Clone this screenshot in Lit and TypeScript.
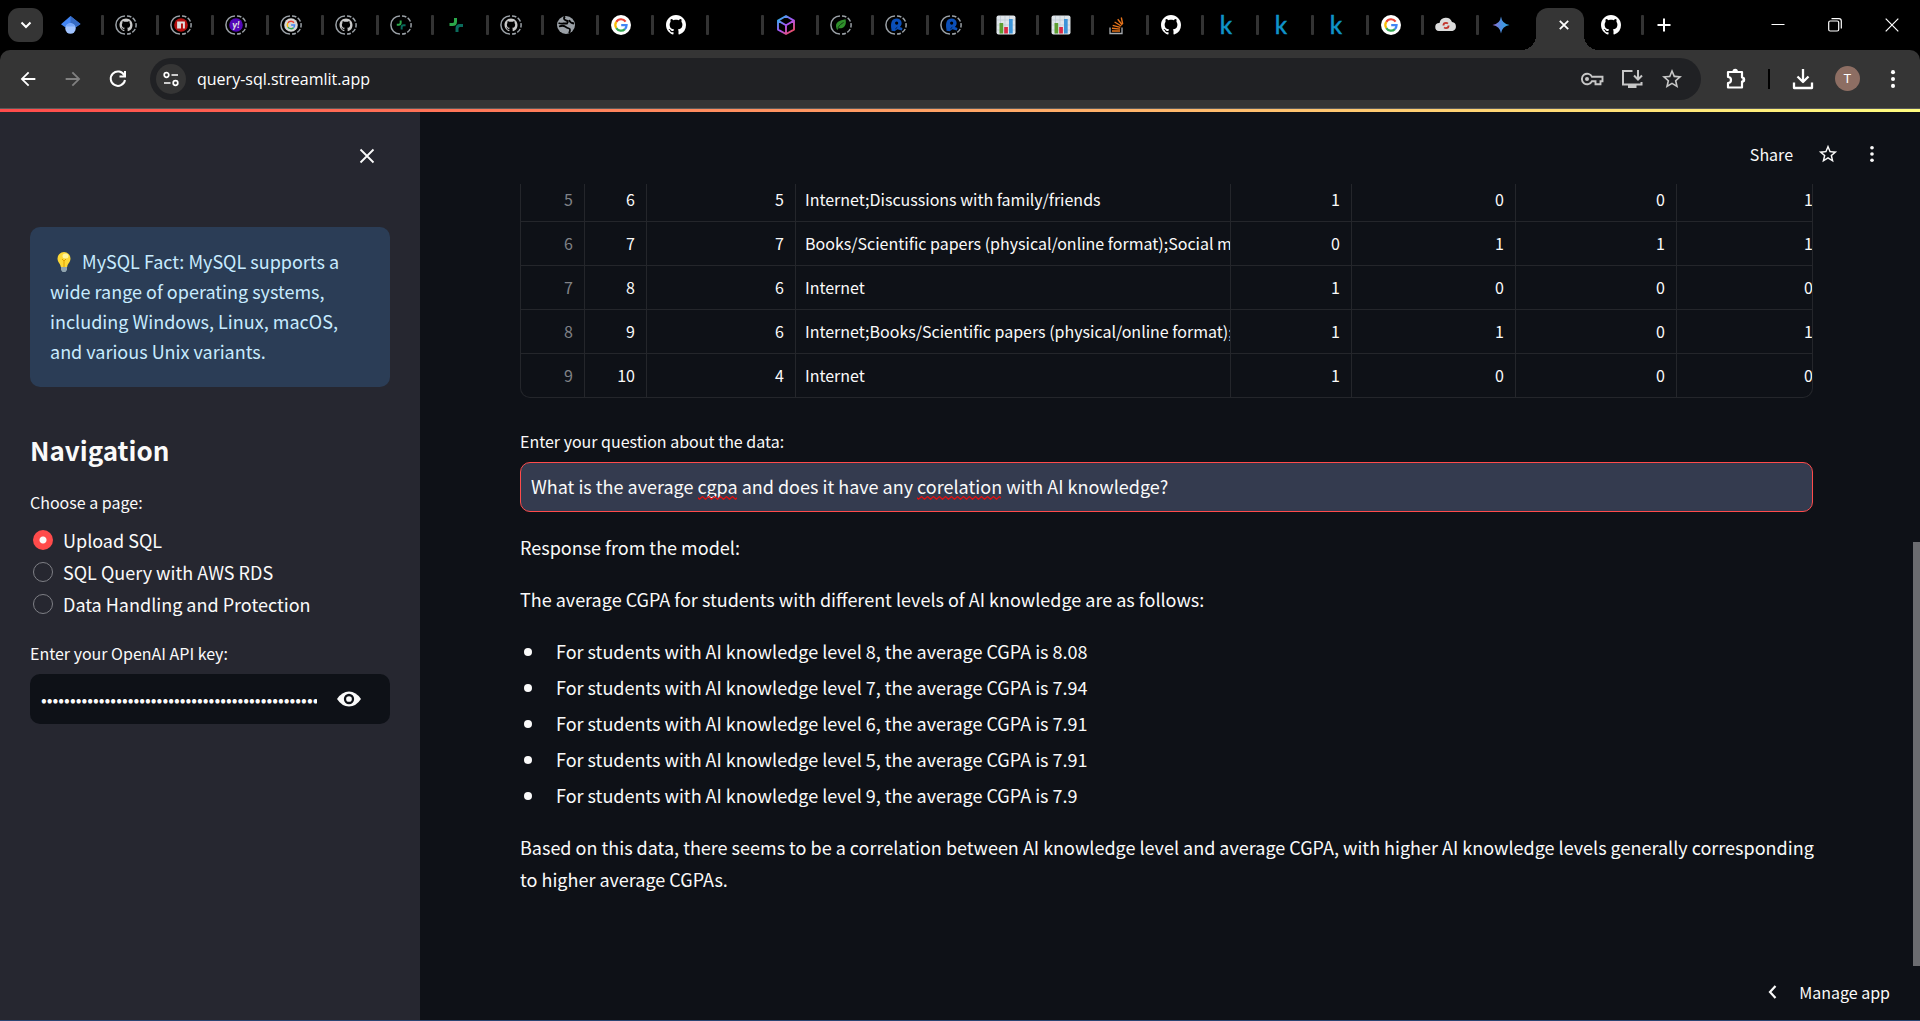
import { LitElement, html, svg, css, TemplateResult, SVGTemplateResult } from "lit";
import { customElement, property, state } from "lit/decorators.js";

const icon = (size: number, box: string, body: SVGTemplateResult): TemplateResult =>
  html`<svg width=${size} height=${size} viewBox=${box} fill="currentColor" aria-hidden="true">${body}</svg>`;

const OCTOCAT =
  "M8 0C3.58 0 0 3.58 0 8c0 3.54 2.29 6.53 5.47 7.59.4.07.55-.17.55-.38 0-.19-.01-.82-.01-1.49-2.01.37-2.53-.49-2.69-.94-.09-.23-.48-.94-.82-1.13-.28-.15-.68-.52-.01-.53.63-.01 1.08.58 1.23.82.72 1.21 1.87.87 2.33.66.07-.52.28-.87.51-1.07-1.78-.2-3.64-.89-3.64-3.95 0-.87.31-1.59.82-2.15-.08-.2-.36-1.02.08-2.12 0 0 .67-.21 2.2.82.64-.18 1.32-.27 2-.27s1.36.09 2 .27c1.53-1.04 2.2-.82 2.2-.82.44 1.1.16 1.92.08 2.12.51.56.82 1.27.82 2.15 0 3.07-1.87 3.75-3.65 3.95.29.25.54.73.54 1.48 0 1.07-.01 1.93-.01 2.2 0 .21.15.46.55.38A8.01 8.01 0 0 0 16 8c0-4.42-3.58-8-8-8z";

const googleG = svg`
  <path d="M14.6 6.6A5.6 5.6 0 0 0 5.3 6.9" fill="none" stroke="#ea4335" stroke-width="2.2"/>
  <path d="M5.3 6.9a5.6 5.6 0 0 0 0 6.2" fill="none" stroke="#fbbc05" stroke-width="2.2"/>
  <path d="M5.3 13.1a5.6 5.6 0 0 0 8.6 1" fill="none" stroke="#34a853" stroke-width="2.2"/>
  <path d="M10.2 10.1h5.4a5.6 5.6 0 0 1-1.8 4.1" fill="none" stroke="#4285f4" stroke-width="2.2"/>`;

const clover = svg`
  <path d="M9.500 3v3.500q0 3-3 3H3.500" fill="none" stroke="#2ba84a" stroke-width="3"/>
  <path d="M17 10.500h-3q-3 0-3 3V17" fill="none" stroke="#0a6b5c" stroke-width="3"/>`;

/** Ring drawn round the favicon of a tab that has been put to sleep. */
const asleep = (body: SVGTemplateResult) => svg`
  <path d="M9 .9a9.100 9.100 0 0 0 0 18.200" fill="none" stroke="#9aa0a6" stroke-width="1.500"/>
  <path d="M11 .9a9.100 9.100 0 0 1 0 18.200" fill="none" stroke="#9aa0a6" stroke-width="1.500" stroke-dasharray="4.500 1.600"/>
  <g transform="translate(3.500 3.500) scale(.65)">${body}</g>`;

const chart = svg`
  <rect x=".5" y=".5" width="19" height="19" rx="2" fill="#dfe5ea"/>
  <path d="M4.500 1v18M9 1v18M13.500 1v18M1 5h18M1 10h18M1 15h18" stroke="#bcc8d2" stroke-width=".7"/>
  <rect x="3.500" y="8" width="3.700" height="10.500" fill="#5c9e31"/>
  <rect x="8.200" y="12" width="3.700" height="6.500" fill="#dc2a45"/>
  <rect x="13" y="4" width="3.700" height="14.500" fill="#3b94d9"/>`;

const ribbon = svg`
  <path d="M3 17C1 6 4 0 11 0c8 0 10 9 5 13l4 1.500-1 4-7-2-4 3-5-.5z" fill="#0b4fb8"/>
  <circle cx="11" cy="7" r="2.500" fill="#000"/>
  <path d="M9 16l3-2.500" stroke="#000" stroke-width="1"/>`;

const github = svg`<path transform="scale(1.25)" fill="#fff" d=${OCTOCAT}/>`;
const githubDim = svg`<path transform="scale(1.25)" fill="#c9c9c9" d=${OCTOCAT}/>`;
const google = svg`<circle cx="10" cy="10" r="10" fill="#fff"/>${googleG}`;
const kaggle = svg`<text x="10" y="19" text-anchor="middle" font-family="Lato, sans-serif" font-size="24" font-weight="500" fill="#0f93c9" stroke="#0f93c9" stroke-width=".4">k</text>`;

const FAVICONS: Record<string, SVGTemplateResult> = {
  scholar: svg`
    <path d="M9.500 1L0 9.200l4.500 3.300h10L19.500 9z" fill="#4285f4"/>
    <path d="M9.500 1v9l5 2.500 5-3.500z" fill="#356ac3"/>
    <circle cx="9.500" cy="13.500" r="5.200" fill="#a0c3ff"/>
    <path d="M4.700 11.500a5.200 5.200 0 0 1 9.600 0z" fill="#76a7fa"/>`,
  githubAsleep: asleep(githubDim),
  npm: asleep(svg`<circle cx="10" cy="10" r="10.500" fill="#b5100f"/><path d="M4 4.500h12v11h-3v-8h-3v8H4z" fill="#ddd"/>`),
  yahoo: asleep(svg`<circle cx="10" cy="10" r="10.500" fill="#5207b8"/><text x="10" y="14" text-anchor="middle" font-family="Lato, sans-serif" font-size="15" font-weight="900" font-style="italic" fill="#ddd">y!</text>`),
  googleAsleep: asleep(svg`<circle cx="10" cy="10" r="10.500" fill="#d5d5d5"/>${googleG}`),
  cloverAsleep: asleep(clover),
  clover,
  globe: svg`<circle cx="10" cy="10" r="9" fill="#9aa0a6"/>
    <path d="M9 1.500Q6.500 4 10 5.500q3 .5 1 3H7q-2 .5-4.500-.5" fill="none" stroke="#000" stroke-width="1.800"/>
    <path d="M3 11.500q4-1.500 6 0t4 2 0 4.500M13 5q1 3 5 3.500" fill="none" stroke="#000" stroke-width="1.800"/>`,
  google,
  github,
  cube: svg`
    <defs><linearGradient id="cube" x1="2" y1="1" x2="18" y2="19" gradientUnits="userSpaceOnUse">
      <stop offset="0" stop-color="#18c4e8"/><stop offset=".5" stop-color="#a855f7"/><stop offset="1" stop-color="#ff4a3d"/>
    </linearGradient></defs>
    <path d="M10 1l8 4.600v9L10 19l-8-4.400v-9zM2 5.600l8 4.600 8-4.600M10 10.200V19" fill="none" stroke="url(#cube)" stroke-width="1.900" stroke-linejoin="round"/>`,
  leaf: asleep(svg`<path d="M3 15C0 5 8 3 17 1c2 9-2 15-11 14l-2 3z" fill="#2f8f2b"/><path d="M5 15C8 9 11 8 14 6" stroke="#0c2b0c" stroke-width="1.300" fill="none"/>`),
  ribbon: asleep(ribbon),
  chart,
  stack: svg`
    <path d="M4 12.500v6h12v-6" fill="none" stroke="#a9adb1" stroke-width="1.300"/>
    <path d="M6 16h8M6 13.300l8 .8M6.700 10.300l7.600 2.100M8.600 7l6.600 4M11.700 4.200l4.600 5.800M15.300 2.500l1.400 6.500" stroke="#e8741b" stroke-width="1.400" fill="none"/>`,
  kaggle,
  cloud: svg`<path d="M3 16a4 4 0 0 1 .5-8A6.500 6.500 0 0 1 16 7a4.600 4.600 0 0 1 .5 9z" fill="#dcdcdc"/>
    <circle cx="10" cy="10.500" r="2.600" fill="none" stroke="#c2342c" stroke-width="1.800" stroke-dasharray="6 2"/>`,
  gemini: svg`
    <defs><linearGradient id="gem"><stop offset="0" stop-color="#9a6bd0"/><stop offset=".5" stop-color="#4c8fe0"/><stop offset="1" stop-color="#2ba6e0"/></linearGradient></defs>
    <path d="M10 1.500Q11 9 18.500 10 11 11 10 18.500 9 11 1.500 10 9 9 10 1.500z" fill="url(#gem)"/>`,
  none: svg``,
};

const TABS: [string, string][] = [
  ["scholar", "Scholar"], ["githubAsleep", "GitHub"], ["npm", "npm"], ["yahoo", "Yahoo"], ["googleAsleep", "Google"],
  ["githubAsleep", "GitHub"], ["cloverAsleep", "Clover"], ["clover", "Clover"], ["githubAsleep", "GitHub"],
  ["globe", "Site"], ["google", "Google"], ["github", "GitHub"], ["none", "Blank"], ["cube", "Cube"], ["leaf", "Leaf"],
  ["ribbon", "Ribbon"], ["ribbon", "Ribbon"], ["chart", "Chart"], ["chart", "Chart"], ["stack", "Stack"],
  ["github", "GitHub"], ["kaggle", "Kaggle"], ["kaggle", "Kaggle"], ["kaggle", "Kaggle"], ["google", "Google"],
  ["cloud", "Cloud"], ["gemini", "Gemini"],
];

const STAR = svg`<path d="M22 9.240l-7.190-.62L12 2 9.190 8.630 2 9.240l5.460 4.730L5.820 21 12 17.270 18.180 21l-1.630-7.030L22 9.240zM12 15.400l-3.760 2.270 1-4.280-3.320-2.880 4.380-.38L12 6.100l1.710 4.040 4.380.38-3.320 2.880 1 4.280L12 15.400z"/>`;
const DOTS = svg`<circle cx="12" cy="4.500" r="2.200"/><circle cx="12" cy="12" r="2.200"/><circle cx="12" cy="19.500" r="2.200"/>`;
const BACK = svg`<path d="M20 11H7.830l5.590-5.590L12 4l-8 8 8 8 1.410-1.410L7.830 13H20z"/>`;

const reset = css`
  * { box-sizing: border-box; }
  button {
    border: 0;
    padding: 0;
    background: none;
    color: inherit;
    font: inherit;
    display: flex;
    align-items: center;
    justify-content: center;
    flex: none;
  }
  svg { display: block; flex: none; }
`;

@customElement("browser-chrome")
export class BrowserChrome extends LitElement {
  static styles = [reset, css`
    :host { display: block; background: #000; color: #fff; }
    .strip { display: flex; align-items: flex-end; height: 50px; }
    .search { width: 35px; height: 34px; margin: 0 6px 8px 8px; border-radius: 11px; background: #353535; }
    .tabs { display: flex; align-items: flex-end; }
    .tab {
      width: 55px;
      height: 50px;
      padding-left: 12px;
      justify-content: space-between;
    }
    .tab svg { overflow: visible; }
    .tab::after { content: ""; width: 3px; height: 20px; border-radius: 1px; background: #333; }
    .tab:nth-child(27)::after { visibility: hidden; }
    .last { width: 60px; padding-left: 17px; }
    .active {
      position: relative;
      width: 48px;
      height: 42px;
      margin-left: 2px;
      padding: 0 0 8px 7px;
      border-radius: 12px 12px 0 0;
      background: #353535;
    }
    .active::before, .active::after {
      content: "";
      position: absolute;
      bottom: 0;
      width: 15px;
      height: 15px;
    }
    .active::before { right: 100%; background: radial-gradient(circle at 0 0, transparent 15px, #353535 15px); }
    .active::after { left: 100%; background: radial-gradient(circle at 100% 0, transparent 15px, #353535 15px); }
    .plus { width: 40px; height: 50px; }
    .window { display: flex; margin-left: auto; }
    .window button { width: 57px; height: 50px; }
    .bar {
      display: flex;
      align-items: center;
      height: 59px;
      padding: 0 5px 1px 5px;
      border-radius: 10px 10px 0 0;
      border-bottom: 1px solid #5a5a5a;
      background: #353535;
    }
    .bar > button { width: 45px; height: 40px; }
    .off { color: #808080; }
    .omni {
      display: flex;
      align-items: center;
      flex: 1;
      height: 42px;
      margin: 0 12px 0 10px;
      padding: 0 9px 0 6px;
      border-radius: 21px;
      background: #202124;
    }
    .site { width: 30px; height: 30px; border-radius: 50%; background: #353535; }
    .url {
      flex: 1;
      min-width: 0;
      height: 30px;
      padding: 0;
      margin-left: 11px;
      border: 0;
      outline: 0;
      background: none;
      color: #fff;
      font: 16px "Open Sans", "Noto Sans", sans-serif;
    }
    .omni .act { width: 40px; height: 40px; color: #c7c7c7; }
    .rule { width: 2px; height: 20px; margin: 0 10px; background: #000; }
    .avatar span {
      width: 25px;
      border-radius: 50%;
      background: #8d6e63;
      color: #fff;
      font: 13px/25px Roboto, sans-serif;
    }
  `];

  render() {
    return html`
      <div class="strip">
        <button class="search" aria-label="Search tabs">
          ${icon(12, "0 0 12 12", svg`<path d="M1.500 3.500L6 8l4.500-4.500" fill="none" stroke="#fff" stroke-width="2"/>`)}
        </button>
        <div class="tabs">
          ${TABS.map(([name, label]) => html`<button class="tab" aria-label=${label}>${icon(20, "0 0 20 20", FAVICONS[name])}</button>`)}
          <button class="active" aria-label="Close tab">
            ${icon(10, "0 0 10 10", svg`<path d="M.8.8l8.400 8.400M9.200.8L.8 9.200" stroke="#fff" stroke-width="1.800"/>`)}
          </button>
          <button class="tab last" aria-label="GitHub">${icon(20, "0 0 20 20", github)}</button>
          <button class="plus" aria-label="New tab">
            ${icon(14, "0 0 14 14", svg`<path d="M7 .5v13M.5 7h13" stroke="#fff" stroke-width="2"/>`)}
          </button>
        </div>
        <div class="window">
          <button aria-label="Minimize">${icon(14, "0 0 14 14", svg`<path d="M.5 6.500h13" stroke="#fff"/>`)}</button>
          <button aria-label="Restore">${icon(14, "0 0 14 14", svg`
            <rect x=".7" y="3" width="10" height="10" rx="1.500" fill="none" stroke="#fff" stroke-width="1.200"/>
            <path d="M3.500.7h7.500a2.300 2.300 0 0 1 2.300 2.300v7.500" fill="none" stroke="#fff" stroke-width="1.200"/>`)}</button>
          <button aria-label="Close">${icon(14, "0 0 14 14", svg`<path d="M.7.7l12.600 12.600M13.300.7L.7 13.300" stroke="#fff" stroke-width="1.200"/>`)}</button>
        </div>
      </div>
      <div class="bar">
        <button aria-label="Back">${icon(22, "0 0 24 24", BACK)}</button>
        <button class="off" aria-label="Forward">${icon(22, "0 0 24 24", svg`<g transform="matrix(-1 0 0 1 24 0)">${BACK}</g>`)}</button>
        <button aria-label="Reload">${icon(24, "0 0 24 24", svg`
          <path d="M18.400 8.500A7.200 7.200 0 1 0 19 13" fill="none" stroke="currentColor" stroke-width="2"/>
          <path d="M20 4v6.500h-6.500v-2H18V4z"/>`)}</button>
        <div class="omni">
          <button class="site" aria-label="Site information">
            ${icon(16, "0 0 16 16", svg`<g fill="none" stroke="#fff" stroke-width="1.700">
              <circle cx="3.500" cy="4" r="2.300"/><path d="M8.500 4H15M1 12h6.500"/><circle cx="12.500" cy="12" r="2.300"/></g>`)}
          </button>
          <input class="url" aria-label="Address" .value=${"query-sql.streamlit.app"} spellcheck="false">
          <button class="act" aria-label="Passwords">${icon(24, "0 0 24 24", svg`<g fill="none" stroke="currentColor" stroke-width="1.900">
            <path d="M12 9.800A5.300 5.300 0 1 0 12 14.200h3.500v3h5v-3H22.500V9.800z"/></g><circle cx="7" cy="12" r="2"/>`)}</button>
          <button class="act" aria-label="Install">${icon(22, "0 0 22 22", svg`<g fill="none" stroke="currentColor" stroke-width="2">
            <path d="M11.500 3H2v13.500h18.500V14M17 2v9M13 7.500l4 4 4-4"/></g><path d="M7 17h8.500v3H7z"/>`)}</button>
          <button class="act" aria-label="Bookmark">${icon(24, "0 0 24 24", STAR)}</button>
        </div>
        <button aria-label="Extensions">${icon(24, "0 0 24 24", svg`
          <path d="M4 5h14v5.500a2 2 0 0 1 0 4V20.500H4v-4.500a3 3 0 0 0 0-6z" fill="none" stroke="currentColor" stroke-width="2.200" stroke-linejoin="round"/>
          <path d="M8.500 4.500a2.700 2.700 0 0 1 5.400 0zM18.500 10a2.700 2.700 0 0 1 0 5.400z"/>`)}</button>
        <div class="rule"></div>
        <button aria-label="Downloads">${icon(22, "0 0 22 22", svg`
          <path d="M11 1v12.500M5.500 8.500L11 14l5.500-5.500M2 14.500V20h18v-5.500" fill="none" stroke="currentColor" stroke-width="2.300" stroke-linejoin="round"/>`)}</button>
        <button class="avatar" aria-label="Profile"><span>T</span></button>
        <button aria-label="Menu">${icon(22, "0 0 24 24", DOTS)}</button>
      </div>
    `;
  }
}

@customElement("app-sidebar")
export class AppSidebar extends LitElement {
  @state() private page = "Upload SQL";

  static styles = [reset, css`
    :host { display: block; padding: 24px 30px; background: #262730; color: #fafafa; font-size: 18px; }
    .top { display: flex; justify-content: flex-end; height: 91px; }
    .close { width: 46px; height: 40px; }
    .fact {
      padding: 19px 20px 21px;
      border-radius: 10px;
      background: #2b3d56;
      color: #c7ebff;
      line-height: 30px;
      margin: 0;
    }
    .fact svg { display: inline-block; vertical-align: -3px; margin: 0 7px; }
    h2 { margin: 46px 0 0; font-size: 26px; line-height: 33px; font-weight: 700; }
    fieldset { border: 0; margin: 24px 0 0; padding: 0; }
    legend, .label { display: block; padding: 0; font-size: 16px; line-height: 24px; }
    .options { display: flex; flex-direction: column; padding-top: 10px; }
    .option { display: flex; align-items: center; gap: 10px; height: 32px; padding-left: 3px; line-height: 30px; }
    .option input {
      appearance: none;
      width: 20px;
      height: 20px;
      margin: 0;
      border-radius: 50%;
      border: 1px solid #7e7f85;
    }
    .option input:checked {
      border: 0;
      background: radial-gradient(circle, #fafafa 3px, #ff4b4b 4px);
    }
    .label { margin-top: 21px; }
    .key {
      display: flex;
      align-items: center;
      height: 50px;
      margin-top: 9px;
      padding: 0 18px 0 11px;
      border-radius: 10px;
      background: #0e1117;
    }
    .key input {
      flex: 1;
      min-width: 0;
      padding: 0 0 2px;
      border: 0;
      outline: 0;
      background: none;
      color: #fafafa;
      font: 17px "Noto Sans CJK JP", sans-serif;
    }
    .key button { width: 46px; height: 40px; margin-left: 9px; }
  `];

  render() {
    return html`
      <div class="top">
        <button class="close" aria-label="Close sidebar">
          ${icon(16, "0 0 16 16", svg`<path d="M1.500 1.500l13 13M14.500 1.500l-13 13" stroke="#fafafa" stroke-width="1.800"/>`)}
        </button>
      </div>
      <p class="fact"><svg width="14" height="20" viewBox="0 0 14 20" aria-hidden="true">
          <path d="M7 0a6.500 6.500 0 0 1 6.500 6.500c0 4-3 5-3.300 8.500H3.800C3.500 11.500.5 10.500.5 6.500A6.500 6.500 0 0 1 7 0z" fill="#fdd835"/>
          <path d="M5 7l2 2 2-2M7 9v6" fill="none" stroke="#e0a000"/>
          <ellipse cx="8.500" cy="4" rx="3" ry="2.500" fill="#fff59d"/>
          <path d="M4 15h6v3l-1.500 2h-3L4 18z" fill="#90a4ae"/>
        </svg> MySQL Fact: MySQL supports a wide range of operating systems, including Windows, Linux, macOS, and various Unix variants.</p>
      <h2>Navigation</h2>
      <fieldset>
        <legend>Choose a page:</legend>
        <div class="options">
          ${["Upload SQL", "SQL Query with AWS RDS", "Data Handling and Protection"].map((name) => html`
            <label class="option">
              <input type="radio" name="page" .checked=${this.page === name} @change=${() => (this.page = name)}>${name}
            </label>`)}
        </div>
      </fieldset>
      <label class="label" for="key">Enter your OpenAI API key:</label>
      <div class="key">
        <input id="key" type="password" .value=${"k".repeat(51)}>
        <button aria-label="Show key">
          <svg width="24" height="16" viewBox="0 0 24 16" aria-hidden="true">
            <path d="M0 8Q5 .5 12 .5T24 8Q19 15.500 12 15.500T0 8z" fill="#fafafa"/>
            <circle cx="12" cy="8" r="4" fill="#fafafa" stroke="#0e1117" stroke-width="2.300"/></svg>
        </button>
      </div>
    `;
  }
}

type Row = [number, number, number, string, number, number, number, number];

const ROWS: Row[] = [
  [5, 6, 5, "Internet;Discussions with family/friends", 1, 0, 0, 1],
  [6, 7, 7, "Books/Scientific papers (physical/online format);Social media", 0, 1, 1, 1],
  [7, 8, 6, "Internet", 1, 0, 0, 0],
  [8, 9, 6, "Internet;Books/Scientific papers (physical/online format);Discussions", 1, 1, 0, 1],
  [9, 10, 4, "Internet", 1, 0, 0, 0],
];

@customElement("data-grid")
export class DataGrid extends LitElement {
  @property({ attribute: false }) rows: Row[] = [];

  static styles = [reset, css`
    :host {
      display: block;
      overflow: hidden;
      border: 1px solid #24262b;
      border-top: 0;
      border-radius: 0 0 10px 10px;
      font-size: 16px;
      line-height: 24px;
    }
    table { width: 1304px; margin-top: -6px; table-layout: fixed; border-collapse: separate; border-spacing: 0; }
    .c0 { width: 64px; } .c1 { width: 62px; } .c2 { width: 149px; } .c3 { width: 435px; }
    .c4 { width: 121px; } .c5 { width: 164px; } .c6 { width: 161px; } .c7 { width: 148px; }
    td {
      height: 44px;
      padding: 0 11px 2px;
      overflow: hidden;
      border-right: 1px solid #24262b;
      border-bottom: 1px solid #24262b;
      text-align: right;
      white-space: nowrap;
    }
    td:first-child { color: #808287; }
    td:nth-child(4) { text-align: left; padding: 0 0 2px 9px; }
    tr:last-child td { height: 43px; border-bottom: 0; }
  `];

  render() {
    return html`<table>
      <colgroup>${[0, 1, 2, 3, 4, 5, 6, 7].map((n) => html`<col class="c${n}">`)}</colgroup>
      <tbody>${this.rows.map((row) => html`<tr>${row.map((cell) => html`<td>${cell}</td>`)}</tr>`)}</tbody>
    </table>`;
  }
}

const LEVELS: [number, string][] = [[8, "8.08"], [7, "7.94"], [6, "7.91"], [5, "7.91"], [9, "7.9"]];

@customElement("app-root")
export class AppRoot extends LitElement {
  static styles = [reset, css`
    :host {
      display: flex;
      flex-direction: column;
      min-height: 100vh;
      background: #0e1117;
      color: #fafafa;
      font-family: "Noto Sans CJK JP", "Noto Sans", sans-serif;
      border-bottom: 1px solid #2b4674;
      box-sizing: border-box;
    }
    .stripe { height: 3px; background: linear-gradient(90deg, #ff4b4b, #fffd80); }
    .body { display: flex; flex: 1; }
    app-sidebar { width: 420px; flex: none; }
    main { display: flex; flex-direction: column; flex: 1; min-width: 0; }
    header {
      display: flex;
      align-items: center;
      justify-content: flex-end;
      height: 72px;
      padding: 12px 19px 0 0;
      font-size: 16px;
    }
    header button { height: 40px; width: 44px; }
    header .share { width: auto; margin-right: 13px; }
    .content { flex: 1; padding: 0 100px; font-size: 18px; line-height: 32px; }
    .label { display: block; margin-top: 31px; font-size: 16px; line-height: 24px; }
    .ask { position: relative; margin-top: 9px; }
    .ask input {
      display: block;
      width: 100%;
      height: 50px;
      padding: 0 10px 2px;
      border: 1px solid #ff4b4b;
      border-radius: 10px;
      outline: 0;
      background: #343b4f;
      color: #fafafa;
      font: inherit;
    }
    .typo {
      position: absolute;
      top: 34px;
      height: 4px;
    }
    .typo svg { width: 100%; height: 4px; }
    .first { left: 178px; width: 39px; }
    .second { left: 397px; width: 84px; }
    p { margin: 20px -8px 0 0; }
    .ask + p { margin-top: 19px; }
    ul { margin: 20px 0 0; padding: 0; list-style: none; display: flex; flex-direction: column; gap: 4px; }
    li { display: flex; align-items: center; gap: 24px; padding-left: 4px; }
    li::before { content: ""; width: 8px; height: 8px; margin-top: 2px; border-radius: 50%; background: #fafafa; }
    footer { display: flex; justify-content: flex-end; padding: 0 23px 8px 0; font-size: 16px; }
    footer button { height: 40px; gap: 18px; }
    .rail { display: grid; width: 7px; flex: none; grid-template-rows: 430fr 424fr 54fr; }
    .thumb { grid-row: 2; background: #6b6c70; }
  `];

  private squiggle(place: string) {
    return html`<span class="typo ${place}" aria-hidden="true"><svg>
      <defs><pattern id="wave" width="6" height="4" patternUnits="userSpaceOnUse">
        <path d="M-1.500 .5L1.500 3.300 4.500 .5 7.500 3.300" fill="none" stroke="#e01010" stroke-width="1.200"/>
      </pattern></defs>
      <rect width="100%" height="4" fill="url(#wave)"/></svg></span>`;
  }

  render() {
    return html`
      <browser-chrome></browser-chrome>
      <div class="stripe"></div>
      <div class="body">
        <app-sidebar></app-sidebar>
        <main>
          <header>
            <button class="share">Share</button>
            <button aria-label="Favorite">${icon(22, "0 0 24 24", STAR)}</button>
            <button aria-label="Options">${icon(20, "0 0 24 24", DOTS)}</button>
          </header>
          <div class="content">
            <data-grid .rows=${ROWS}></data-grid>
            <label class="label" for="question">Enter your question about the data:</label>
            <div class="ask">
              <input id="question" type="text" spellcheck="false" .value=${"What is the average cgpa and does it have any corelation with AI knowledge?"}>
              ${this.squiggle("first")}${this.squiggle("second")}
            </div>
            <p>Response from the model:</p>
            <p>The average CGPA for students with different levels of AI knowledge are as follows:</p>
            <ul>${LEVELS.map(([level, cgpa]) => html`<li>For students with AI knowledge level ${level}, the average CGPA is ${cgpa}</li>`)}</ul>
            <p>Based on this data, there seems to be a correlation between AI knowledge level and average CGPA, with higher AI knowledge levels generally corresponding to higher average CGPAs.</p>
          </div>
          <footer>
            <button>${icon(16, "0 0 16 16", svg`<path d="M10.500 2L5 8l5.500 6" fill="none" stroke="#fafafa" stroke-width="2.200"/>`)}Manage app</button>
          </footer>
        </main>
        <div class="rail"><div class="thumb"></div></div>
      </div>
    `;
  }
}
